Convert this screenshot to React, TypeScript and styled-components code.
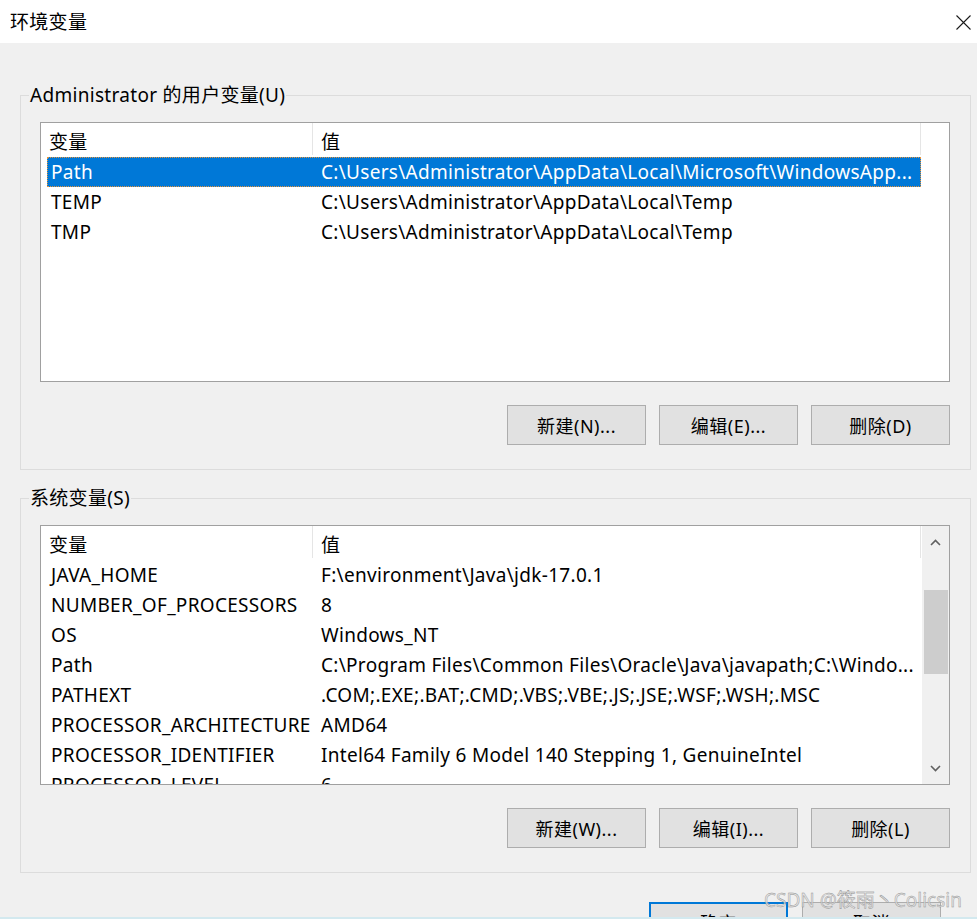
import styled, { createGlobalStyle } from "styled-components";

const GlobalStyle = createGlobalStyle`
  html, body {
    margin: 0;
    padding: 0;
    overflow: hidden;
    background: #f0f0f0;
  }
  #root {
    height: 919px;
  }
`;

const FONT = `"Noto Sans", "Noto Sans CJK SC", sans-serif`;

type Variable = { name: string; value: string };

const userVars: Variable[] = [
  { name: "Path", value: "C:\\Users\\Administrator\\AppData\\Local\\Microsoft\\WindowsApp..." },
  { name: "TEMP", value: "C:\\Users\\Administrator\\AppData\\Local\\Temp" },
  { name: "TMP", value: "C:\\Users\\Administrator\\AppData\\Local\\Temp" },
];

const systemVars: Variable[] = [
  { name: "JAVA_HOME", value: "F:\\environment\\Java\\jdk-17.0.1" },
  { name: "NUMBER_OF_PROCESSORS", value: "8" },
  { name: "OS", value: "Windows_NT" },
  { name: "Path", value: "C:\\Program Files\\Common Files\\Oracle\\Java\\javapath;C:\\Windo..." },
  { name: "PATHEXT", value: ".COM;.EXE;.BAT;.CMD;.VBS;.VBE;.JS;.JSE;.WSF;.WSH;.MSC" },
  { name: "PROCESSOR_ARCHITECTURE", value: "AMD64" },
  { name: "PROCESSOR_IDENTIFIER", value: "Intel64 Family 6 Model 140 Stepping 1, GenuineIntel" },
  { name: "PROCESSOR_LEVEL", value: "6" },
];

const Window = styled.div`
  position: relative;
  height: 919px;
  overflow: hidden;
  display: flex;
  flex-direction: column;
  background: #f0f0f0;
  font-family: ${FONT};
  font-size: 19px;
  letter-spacing: 0.3px;
  color: #000;
`;

const TitleBar = styled.div`
  height: 43px;
  flex-shrink: 0;
  background: #fff;
  display: flex;
  align-items: center;
  justify-content: space-between;
  padding: 0 6px 0 10px;
`;

const Title = styled.span`
  line-height: 22px;
`;

const CloseButton = styled.div`
  width: 15px;
  height: 15px;
  display: flex;
  margin-top: 1px;
`;

const Content = styled.div`
  display: flex;
  flex-direction: column;
  padding: 0 6px 0 20px;
`;

const GroupBox = styled.div<{ $top: number }>`
  margin-top: ${(p) => p.$top}px;
  border: 1px solid #dcdcdc;
  padding: 0 20px 24px 19px;
  display: flex;
  flex-direction: column;
`;

const Legend = styled.span`
  align-self: flex-start;
  margin: -12px 0 0 -11px;
  padding: 0 1px;
  height: 22px;
  line-height: 22px;
  background: #f0f0f0;
`;

const ListView = styled.div`
  margin-top: 16px;
  height: 260px;
  box-sizing: border-box;
  border: 1px solid #a0a0a0;
  background: #fff;
  display: flex;
  overflow: hidden;
`;

const Columns = styled.div`
  flex: 1;
  display: flex;
  flex-direction: column;
  min-width: 0;
`;

const HeaderRow = styled.div`
  display: grid;
  grid-template-columns: 272px 608px;
  height: 34px;
  flex-shrink: 0;
`;

const HeaderCell = styled.div`
  height: 32px;
  padding-left: 8px;
  line-height: 38px;
  border-right: 1px solid #e5e5e5;
`;

const Row = styled.div<{ $selected?: boolean }>`
  display: grid;
  grid-template-columns: 266px 606px;
  width: 874px;
  margin-left: 6px;
  height: 30px;
  flex-shrink: 0;
  box-sizing: border-box;
  line-height: 28px;
  white-space: nowrap;
  background: ${(p) => (p.$selected ? "#0078d7" : "transparent")};
  color: ${(p) => (p.$selected ? "#fff" : "#000")};
  border: 1px dotted ${(p) => (p.$selected ? "#e8943a" : "transparent")};
`;

const Cell = styled.div<{ $first?: boolean }>`
  overflow: hidden;
  padding-left: ${(p) => (p.$first ? 3 : 7)}px;
`;

const ScrollBar = styled.div`
  width: 27px;
  flex-shrink: 0;
  background: #f0f0f0;
  display: flex;
  flex-direction: column;
  align-items: center;
`;

const ScrollArrow = styled.div`
  height: 32px;
  width: 100%;
  display: flex;
  align-items: center;
  justify-content: center;
`;

const ScrollTrack = styled.div`
  flex: 1;
  width: 100%;
  display: flex;
  flex-direction: column;
  align-items: center;
`;

const ScrollThumb = styled.div`
  margin-top: 32px;
  width: 24px;
  height: 84px;
  background: #cdcdcd;
`;

const ButtonRow = styled.div`
  margin-top: 23px;
  display: flex;
  justify-content: flex-end;
  gap: 13px;
`;

const Button = styled.div<{ $default?: boolean }>`
  width: 139px;
  height: 40px;
  box-sizing: border-box;
  background: #e1e1e1;
  border: ${(p) => (p.$default ? "2px solid #0078d7" : "1px solid #adadad")};
  display: flex;
  align-items: center;
  justify-content: center;
  font-size: 18px;
  letter-spacing: 0.5px;
  flex-shrink: 0;
`;

const Footer = styled.div`
  margin-top: 29px;
  display: flex;
  justify-content: flex-end;
  gap: 14px;
  padding-right: 30px;
`;

const BottomEdge = styled.div`
  position: absolute;
  left: 0;
  right: 0;
  bottom: 0;
  height: 2px;
  background: #d3e9ef;
`;

const Watermark = styled.div`
  position: absolute;
  right: 15px;
  bottom: 8px;
  font-size: 19px;
  letter-spacing: 0;
  line-height: 22px;
  color: rgba(225, 225, 225, 0.8);
  -webkit-text-stroke: 0.4px #8f8f8f;
  white-space: nowrap;
`;

const Chevron = ({ up }: { up?: boolean }) => (
  <svg width="11" height="7" viewBox="0 0 11 7">
    <path
      d={up ? "M1 6 L5.5 1.5 L10 6" : "M1 1 L5.5 5.5 L10 1"}
      fill="none"
      stroke="#606060"
      strokeWidth="1.6"
    />
  </svg>
);

const VariableList = ({
  items,
  selected,
  scroll,
}: {
  items: Variable[];
  selected?: number;
  scroll?: boolean;
}) => (
  <ListView>
    <Columns>
      <HeaderRow>
        <HeaderCell>变量</HeaderCell>
        <HeaderCell>值</HeaderCell>
      </HeaderRow>
      {items.map((v, i) => (
        <Row key={v.name + i} $selected={i === selected}>
          <Cell $first>{v.name}</Cell>
          <Cell>{v.value}</Cell>
        </Row>
      ))}
    </Columns>
    {scroll && (
      <ScrollBar>
        <ScrollArrow>
          <Chevron up />
        </ScrollArrow>
        <ScrollTrack>
          <ScrollThumb />
        </ScrollTrack>
        <ScrollArrow>
          <Chevron />
        </ScrollArrow>
      </ScrollBar>
    )}
  </ListView>
);

const App = () => {
  return (
    <>
      <GlobalStyle />
      <Window>
        <TitleBar>
          <Title>环境变量</Title>
          <CloseButton>
            <svg width="15" height="15" viewBox="0 0 15 15">
              <path d="M0.5 0.5 L14.5 14.5 M14.5 0.5 L0.5 14.5" stroke="#1a1a1a" strokeWidth="1.1" />
            </svg>
          </CloseButton>
        </TitleBar>
        <Content>
          <GroupBox $top={52}>
            <Legend>Administrator 的用户变量(U)</Legend>
            <VariableList items={userVars} selected={0} />
            <ButtonRow>
              <Button>新建(N)...</Button>
              <Button>编辑(E)...</Button>
              <Button>删除(D)</Button>
            </ButtonRow>
          </GroupBox>
          <GroupBox $top={28}>
            <Legend>系统变量(S)</Legend>
            <VariableList items={systemVars} scroll />
            <ButtonRow>
              <Button>新建(W)...</Button>
              <Button>编辑(I)...</Button>
              <Button>删除(L)</Button>
            </ButtonRow>
          </GroupBox>
          <Footer>
            <Button $default>确定</Button>
            <Button>取消</Button>
          </Footer>
        </Content>
        <BottomEdge />
        <Watermark>CSDN @筱雨丶Colicsin</Watermark>
      </Window>
    </>
  );
};

export default App;
